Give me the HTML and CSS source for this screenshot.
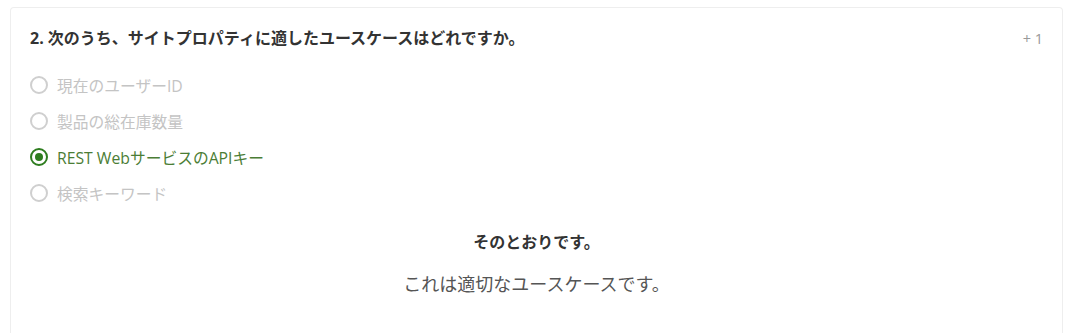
FILE: index.html
```html
<!DOCTYPE html>
<html lang="ja">
  <head>
    <meta charset="UTF-8" />
    <title>Quiz</title>
    <link rel="stylesheet" href="styles.css">
  </head>
  <body>
    <div class="question-card">
      <div class="question-head">
        <div class="question-title">2. 次のうち、サイトプロパティに適したユースケースはどれですか。</div>
        <div class="question-points">+ 1</div>
      </div>

      <ul class="options">
        <li class="option"><span class="radio"></span>現在のユーザーID</li>
        <li class="option"><span class="radio"></span>製品の総在庫数量</li>
        <li class="option selected"><span class="radio"></span>REST WebサービスのAPIキー</li>
        <li class="option"><span class="radio"></span>検索キーワード</li>
      </ul>

      <div class="feedback">
        <div class="feedback-title">そのとおりです。</div>
        <div class="feedback-text">これは適切なユースケースです。</div>
      </div>
    </div>
  </body>
</html>
```

FILE: styles.css
```css
body {
  font-family: 'Open Sans', 'Noto Sans CJK JP', sans-serif;
  margin: 0;
  padding: 7px 17px 0 10px;
  background: #fff;
  color: #333;
}

.question-card {
  border: 1px solid #eeeeee;
  border-bottom: none;
  border-radius: 4px 4px 0 0;
  padding: 18px 19px 40px 19px;
  min-height: 320px;
  box-sizing: border-box;
}

.question-head {
  display: flex;
  justify-content: space-between;
  align-items: center;
}

.question-title {
  font-size: 16px;
  font-weight: bold;
  color: #333;
  line-height: 24px;
}

.question-points {
  font-size: 14.5px;
  color: #999;
}

.options {
  list-style: none;
  margin: 17px 0 0 0;
  padding: 0;
}

.option {
  display: flex;
  align-items: center;
  gap: 9px;
  height: 36px;
  font-size: 15.75px;
  color: #c4c4c4;
}

.radio {
  width: 14px;
  height: 14px;
  border: 2px solid #cfcfcf;
  border-radius: 50%;
  box-sizing: content-box;
  position: relative;
  flex-shrink: 0;
}

.option.selected {
  color: #4b7d35;
}

.option.selected .radio {
  border-color: #2e7d1f;
}

.option.selected .radio::after {
  content: '';
  position: absolute;
  left: 3px;
  top: 3px;
  width: 8px;
  height: 8px;
  border-radius: 50%;
  background: #2e7d1f;
}

.feedback {
  text-align: center;
  margin-top: 19px;
}

.feedback-title {
  font-size: 16px;
  font-weight: bold;
  color: #333;
  line-height: 24px;
}

.feedback-text {
  margin-top: 17px;
  font-size: 18px;
  color: #555;
  line-height: 26px;
}
```
